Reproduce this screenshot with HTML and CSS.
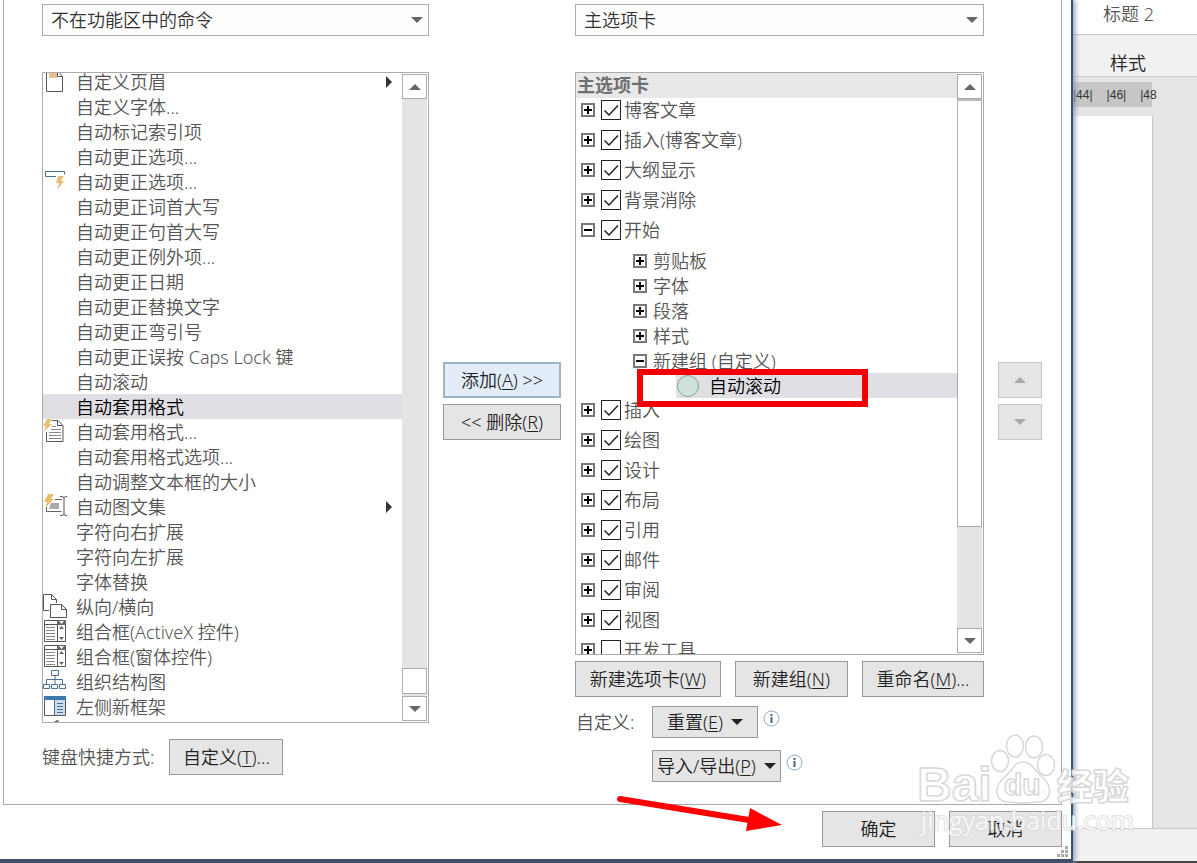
FILE: index.html
```html
<!DOCTYPE html>
<html lang="zh-CN">
<head>
<meta charset="utf-8">
<title>自定义功能区</title>
<link rel="stylesheet" href="styles.css">
</head>
<body>
<svg class="defs" aria-hidden="true">
  <symbol id="up" viewBox="0 0 12 6"><path d="M0 6 6 0l6 6z"/></symbol>
  <symbol id="down" viewBox="0 0 12 6"><path d="M0 0h12L6 6z"/></symbol>
  <symbol id="plus" viewBox="0 0 14 14"><path d="M1 1h12v12H1z" fill="#fff" stroke="#777" stroke-width="2"/><path d="M3 7h8M7 3v8" stroke="#000" stroke-width="2"/></symbol>
  <symbol id="minus" viewBox="0 0 14 14"><path d="M1 1h12v12H1z" fill="#fff" stroke="#777" stroke-width="2"/><path d="M3 7h8" stroke="#000" stroke-width="2"/></symbol>
  <symbol id="combo" viewBox="0 0 24 24"><path d="M1.500 1.500h21v21h-21zM1.500 5.500h21M14.500 5.500v17" fill="none" stroke="#555"/><path d="M14 1h9v5h-9zM16 10l2.500-3 2.500 3zM16 18h5l-2.500 3z" fill="#666"/><path d="M16 2h5l-2.500 3z" fill="#fff"/><path d="M3 8.500h9M3 11.500h9M3 14.500h9M3 17.500h9M3 20.500h9" stroke="#888"/></symbol>
  <symbol id="info" viewBox="0 0 17 17"><circle cx="8.500" cy="8.500" r="7.500" fill="#fff" stroke="#8fa9c0"/><path d="M7.500 4h2v2h-2zM7.500 7h2v6h-2z" fill="#44688c"/></symbol>
</svg>

<div class="screen">
  <main class="dialog">
    <div class="panel">
      <section class="column">
        <select class="picker" aria-label="从下列位置选择命令"><option>不在功能区中的命令</option></select>
        <div class="listbox">
          <ul class="commands">
            <li><svg class="ic" viewBox="0 0 24 24"><path d="M3.500 1.500h11l5 6v15h-16z" fill="#fff" stroke="#555"/><path d="M6 1h8v8H6z" fill="#e3c08d"/><path d="M14.500 1.500v6h5" fill="none" stroke="#555"/></svg><span>自定义页眉</span><svg class="sub" viewBox="0 0 6 12"><path d="M0 0 6 6 0 12z"/></svg></li>
            <li><span>自定义字体...</span></li>
            <li><span>自动标记索引项</span></li>
            <li><span>自动更正选项...</span></li>
            <li><svg class="ic" viewBox="0 0 24 24"><path d="M13 7.500H2.500v-5h19v3" fill="none" stroke="#4a6d90"/><path d="M15 7h6l-3 5h3l-7 9 2-7h-3z" fill="#e9be72"/></svg><span>自动更正选项...</span></li>
            <li><span>自动更正词首大写</span></li>
            <li><span>自动更正句首大写</span></li>
            <li><span>自动更正例外项...</span></li>
            <li><span>自动更正日期</span></li>
            <li><span>自动更正替换文字</span></li>
            <li><span>自动更正弯引号</span></li>
            <li><span>自动更正误按 Caps Lock 键</span></li>
            <li><span>自动滚动</span></li>
            <li class="selected"><span>自动套用格式</span></li>
            <li><svg class="ic" viewBox="0 0 24 24"><path d="M9 1.500h6l5 5v16H3.500V13" fill="#fff" stroke="#555"/><path d="M14.500 1.500v5h5" fill="none" stroke="#555"/><path d="M9 7.500h4M8 10.500h10M6 13.500h12M6 16.500h12M6 19.500h12" stroke="#888"/><path d="M4 0h5L6 5h3l-8 8 2-6H0z" fill="#e9be72"/></svg><span>自动套用格式...</span></li>
            <li><span>自动套用格式选项...</span></li>
            <li><span>自动调整文本框的大小</span></li>
            <li><svg class="ic" viewBox="0 0 24 24"><path d="M12 5.500h7M3.500 13v4.500h15" fill="none" stroke="#666"/><path d="M8 9h8v6H6z" fill="#aaa"/><path d="M17 2.500h2l2 1 2-1h1M21 3v18M17 21.500h2l2-1 2 1h1" fill="none" stroke="#555"/><path d="M5 0h6L8 5h3l-9 9 2-6H1z" fill="#e9be72"/></svg><span>自动图文集</span><svg class="sub" viewBox="0 0 6 12"><path d="M0 0 6 6 0 12z"/></svg></li>
            <li><span>字符向右扩展</span></li>
            <li><span>字符向左扩展</span></li>
            <li><span>字体替换</span></li>
            <li><svg class="ic" viewBox="0 0 24 24"><path d="M6 16.500H.5v-16h8l5 5V9M8.500.5v5h5" fill="none" stroke="#555"/><path d="M7.500 10.500h11l5 5v8h-16z" fill="#fff" stroke="#555"/><path d="M18.500 10.500v5h5" fill="none" stroke="#555"/></svg><span>纵向/横向</span></li>
            <li><svg class="ic"><use href="#combo"/></svg><span>组合框(ActiveX 控件)</span></li>
            <li><svg class="ic"><use href="#combo"/></svg><span>组合框(窗体控件)</span></li>
            <li><svg class="ic" viewBox="0 0 24 24"><path d="M8.500 1.500h7v5h-7zM.5 15.500h6v4h-6zM8.500 15.500h6v4h-6zM16.500 15.500h6v4h-6zM12 7v8M3.500 15v-4.500h16V15" fill="none" stroke="#4a7299"/></svg><span>组织结构图</span></li>
            <li><svg class="ic" viewBox="0 0 24 24"><path d="M1.500 2.500h21v19h-21z" fill="#fff" stroke="#555"/><path d="M12 5h10v16H12z" fill="#cbdcec"/><path d="M1 2h22v4H1z" fill="#4177b0"/><path d="M11.500 6v15M14 9.500h6M14 12.500h6M14 15.500h6M14 18.500h6" stroke="#4a6d90"/></svg><span>左侧新框架</span></li>
            <li><svg class="ic" viewBox="0 0 24 24"><path d="M11 3q2-2 5-2l-2 3z" fill="#555"/></svg></li>
          </ul>
          <div class="scroll">
            <button class="step" aria-label="向上滚动"><svg class="tri"><use href="#up"/></svg></button>
            <div class="track low"><div class="thumb short"></div></div>
            <button class="step" aria-label="向下滚动"><svg class="tri"><use href="#down"/></svg></button>
          </div>
        </div>
        <div class="keyboard"><span>键盘快捷方式:</span><button class="btn">自定义(<u>T</u>)...</button></div>
      </section>

      <div class="transfer">
        <button class="btn primary">添加(<u>A</u>) &gt;&gt;</button>
        <button class="btn">&lt;&lt; 删除(<u>R</u>)</button>
      </div>

      <section class="column">
        <select class="picker" aria-label="自定义功能区"><option>主选项卡</option></select>
        <div class="listbox">
          <div class="tree">
            <h2>主选项卡</h2>
            <div class="tab"><svg class="box"><use href="#plus"/></svg><label><input type="checkbox" checked>博客文章</label></div>
            <div class="tab"><svg class="box"><use href="#plus"/></svg><label><input type="checkbox" checked>插入(博客文章)</label></div>
            <div class="tab"><svg class="box"><use href="#plus"/></svg><label><input type="checkbox" checked>大纲显示</label></div>
            <div class="tab"><svg class="box"><use href="#plus"/></svg><label><input type="checkbox" checked>背景消除</label></div>
            <div class="tab"><svg class="box"><use href="#minus"/></svg><label><input type="checkbox" checked>开始</label></div>
            <div class="groups">
              <div class="group"><svg class="box"><use href="#plus"/></svg>剪贴板</div>
              <div class="group"><svg class="box"><use href="#plus"/></svg>字体</div>
              <div class="group"><svg class="box"><use href="#plus"/></svg>段落</div>
              <div class="group"><svg class="box"><use href="#plus"/></svg>样式</div>
              <div class="group"><svg class="box"><use href="#minus"/></svg>新建组 (自定义)</div>
              <div class="command"><svg class="dot" viewBox="0 0 24 24"><circle cx="12" cy="12" r="10.500" fill="#cfe3dc" stroke="#8f9f9a"/></svg>自动滚动<div class="marker"></div></div>
            </div>
            <div class="tab"><svg class="box"><use href="#plus"/></svg><label><input type="checkbox" checked>插入</label></div>
            <div class="tab"><svg class="box"><use href="#plus"/></svg><label><input type="checkbox" checked>绘图</label></div>
            <div class="tab"><svg class="box"><use href="#plus"/></svg><label><input type="checkbox" checked>设计</label></div>
            <div class="tab"><svg class="box"><use href="#plus"/></svg><label><input type="checkbox" checked>布局</label></div>
            <div class="tab"><svg class="box"><use href="#plus"/></svg><label><input type="checkbox" checked>引用</label></div>
            <div class="tab"><svg class="box"><use href="#plus"/></svg><label><input type="checkbox" checked>邮件</label></div>
            <div class="tab"><svg class="box"><use href="#plus"/></svg><label><input type="checkbox" checked>审阅</label></div>
            <div class="tab"><svg class="box"><use href="#plus"/></svg><label><input type="checkbox" checked>视图</label></div>
            <div class="tab"><svg class="box"><use href="#plus"/></svg><label><input type="checkbox">开发工具</label></div>
          </div>
          <div class="scroll">
            <button class="step" aria-label="向上滚动"><svg class="tri"><use href="#up"/></svg></button>
            <div class="track"><div class="thumb long"></div></div>
            <button class="step" aria-label="向下滚动"><svg class="tri"><use href="#down"/></svg></button>
          </div>
        </div>
        <div class="actions">
          <button class="btn">新建选项卡(<u>W</u>)</button>
          <button class="btn">新建组(<u>N</u>)</button>
          <button class="btn">重命名(<u>M</u>)...</button>
        </div>
        <div class="custom">
          <span>自定义:</span>
          <div class="line"><button class="btn menu reset"><span>重置(<u>E</u>)</span><svg class="tri"><use href="#down"/></svg></button><svg class="info"><use href="#info"/></svg></div>
          <div class="line second"><button class="btn menu"><span>导入/导出(<u>P</u>)</span><svg class="tri"><use href="#down"/></svg></button><svg class="info"><use href="#info"/></svg></div>
        </div>
      </section>

      <div class="transfer">
        <button class="btn" disabled aria-label="上移"><svg class="tri"><use href="#up"/></svg></button>
        <button class="btn" disabled aria-label="下移"><svg class="tri"><use href="#down"/></svg></button>
      </div>
    </div>
    <footer class="footer">
      <button class="btn">确定</button>
      <button class="btn">取消</button>
    </footer>
    <svg class="grip" viewBox="0 0 12 12"><path d="M8 0h3v3H8zM4 4h3v3H4zM8 4h3v3H8zM0 8h3v3H0zM4 8h3v3H4zM8 8h3v3H8z" fill="#aaa"/></svg>
    <svg class="arrow" viewBox="0 0 166 40"><path d="M5 6 134 27" stroke="#f00" stroke-width="6" stroke-linecap="round"/><path d="M135 15 167 32l-36 6z" fill="#f00"/></svg>
  </main>

  <aside class="document">
    <div class="style-name">标题 2</div>
    <div class="style-group">样式</div>
    <div class="ruler"><div class="ticks"><span>|44|</span><span>|46|</span><span>|48</span></div></div>
    <div class="page"></div>
    <div class="status"></div>
  </aside>
</div>

<svg class="watermark" viewBox="0 0 220 110">
  <g fill="#fff" fill-opacity=".85" stroke="#d8d8d8" stroke-width="1.500">
    <ellipse cx="81" cy="31" rx="8.500" ry="10.500"/><ellipse cx="96" cy="16" rx="8.500" ry="11"/><ellipse cx="115" cy="17" rx="8.500" ry="11"/><ellipse cx="127" cy="35" rx="8.500" ry="10.500"/>
    <path d="M104 32c9 0 12 9 19 15 11 9 10 25-4 25-8 1-22 1-29 0-16 0-15-17-4-25 7-6 9-15 18-15z"/>
    <text class="wm-latin" x="-2" y="71">Bai</text>
    <text class="wm-du" x="85" y="65">du</text>
    <text class="wm-cjk" x="138" y="70">经验</text>
  </g>
  <text class="wm-url" x="2" y="100">jingyan.baidu.com</text>
</svg>
</body>
</html>
```

FILE: styles.css
```css
* { box-sizing: border-box; }

body {
  margin: 0;
  height: 100vh;
  overflow: hidden;
  position: relative;
  font: 350 18px/24px "Noto Sans", "Noto Sans CJK SC", sans-serif;
  color: #555;
  background: #444;
}

button, select, input { font: inherit; color: inherit; margin: 0; }
svg { display: block; flex: none; }
u { text-underline-offset: 2px; text-decoration-thickness: 1px; }
.defs { position: absolute; width: 0; height: 0; }

.screen { display: flex; height: 100%; }

.dialog {
  flex: 1;
  min-width: 0;
  position: relative;
  z-index: 1;
  display: flex;
  flex-direction: column;
  padding-left: 3px;
  background: #fff;
  border-right: 2px solid #3b5468;
  border-bottom: 4px solid #3f5068;
  box-shadow: 2px 0 5px #8c9bb8;
}

.panel {
  flex: 1;
  min-height: 0;
  display: grid;
  grid-template-columns: 387fr 118px 409fr 44px;
  grid-template-rows: minmax(0, 1fr);
  gap: 14px;
  margin-right: 9px;
  padding: 4px 19px 22px 38px;
  border: 1px solid #a5a9ac;
  border-top: 0;
}

.column { display: flex; flex-direction: column; min-width: 0; min-height: 0; }

.picker {
  appearance: none;
  width: 100%;
  height: 32px;
  flex: none;
  margin-bottom: 36px;
  padding: 0 8px;
  border: 1px solid #ababab;
  border-radius: 0;
  color: #333;
  background: #fdfdfd url("data:image/svg+xml,%3Csvg xmlns='http://www.w3.org/2000/svg' width='12' height='6'%3E%3Cpath d='M0 0h12L6 6z' fill='%23666'/%3E%3C/svg%3E") no-repeat right 5px center;
}

.listbox {
  flex: 1;
  min-height: 0;
  display: flex;
  border: 1px solid #ababab;
  overflow: hidden;
}

.commands {
  flex: 1;
  min-width: 0;
  list-style: none;
  margin: -4px 0 0;
  padding: 0;
}
.commands li {
  display: flex;
  align-items: center;
  position: relative;
  height: 25px;
  padding: 0 10px 0 33px;
}
.commands span { flex: 1; white-space: nowrap; }
.commands .selected { background: #dfdfe4; color: #000; }
.ic { width: 24px; height: 24px; position: absolute; left: 0; top: 0; }
.sub { width: 6px; height: 12px; fill: #333; }

.scroll { width: 26px; display: flex; flex-direction: column; padding: 1px 1px 1px 0; }
.step {
  width: 25px;
  height: 25px;
  flex: none;
  padding: 0;
  display: grid;
  place-items: center;
  border: 1px solid #ababab;
  background: #fff;
}
.tri { width: 12px; height: 6px; fill: #666; }
.track { flex: 1; min-height: 0; display: flex; flex-direction: column; background: #e4e4e4; }
.low { justify-content: flex-end; padding-bottom: 2px; }
.thumb { border: 1px solid #ababab; background: #fff; }
.short { height: 26px; }
.long { height: 81%; border-top-width: 2px; border-top-color: #bbb; }

.tree { flex: 1; min-width: 0; }
.tree h2 {
  margin: 0;
  padding-left: 1px;
  height: 25px;
  font-size: 18px;
  font-weight: 700;
  line-height: 25px;
  color: #707070;
  background: #e8e8e8;
}
.tab { display: flex; align-items: center; gap: 6px; height: 24px; margin-bottom: 6px; padding-left: 5px; }
.tab label { display: flex; align-items: center; gap: 3px; }
.box { width: 14px; height: 14px; }
input[type="checkbox"] {
  appearance: none;
  width: 20px;
  height: 20px;
  border: 1px solid #222;
  background: #fff;
}
input[type="checkbox"]:checked {
  background: #fff url("data:image/svg+xml,%3Csvg xmlns='http://www.w3.org/2000/svg' width='18' height='18'%3E%3Cpath d='M2.500 9.500 7 14 16 4.500' fill='none' stroke='%23222' stroke-width='1.500'/%3E%3C/svg%3E") center;
}
.groups { padding-left: 57px; }
.group { display: flex; align-items: center; gap: 6px; height: 25px; }
.command {
  position: relative;
  display: flex;
  align-items: center;
  gap: 9px;
  height: 25px;
  margin-left: 43px;
  color: #000;
  background: #dfdfe4;
}
.dot { width: 24px; height: 24px; }
.marker {
  position: absolute;
  left: -39px;
  top: -4px;
  width: 231px;
  height: 38px;
  border: 6px solid #f00000;
}

.btn {
  height: 36px;
  padding: 0;
  white-space: nowrap;
  border: 1px solid #999;
  background: #e5e5e5;
  color: #222;
}
.primary { border: 2px solid #a3b3c6; background: #e3ecf9; }
.btn:disabled { display: grid; place-items: center; border-color: #c6c6c6; }
.btn:disabled .tri { fill: #aaa; }

.keyboard { display: flex; align-items: center; gap: 15px; margin: 16px 0 7px; }
.keyboard .btn { width: 114px; }

.transfer { display: flex; flex-direction: column; gap: 6px; padding-top: 358px; }

.actions { display: flex; justify-content: space-between; gap: 14px; margin-top: 6px; }
.actions .btn { flex: 113 1 0; }
.actions .btn:first-child { flex-grow: 146; }
.actions .btn:last-child { flex-grow: 122; }

.custom { display: grid; grid-template-columns: 76px 1fr; row-gap: 12px; align-items: center; margin-top: 9px; padding-left: 1px; }
.line { display: flex; gap: 5px; }
.second { grid-column: 2; }
.menu { display: flex; align-items: center; gap: 8px; height: 32px; padding: 0 4px; }
.menu .tri { fill: #222; }
.reset { padding: 0 14px; }
.info { width: 17px; height: 17px; margin-top: 4px; }

.footer { display: flex; justify-content: flex-end; gap: 14px; padding: 6px 9px 12px 0; }
.footer .btn { width: 113px; }
.grip { position: absolute; right: 2px; bottom: 1px; width: 12px; height: 12px; }
.arrow { position: absolute; left: 615px; bottom: 26px; width: 166px; height: 40px; overflow: visible; fill: none; }

.document {
  width: 124px;
  flex: none;
  display: flex;
  flex-direction: column;
  margin-bottom: 2px;
  background: #e5e5e5;
}
.style-name { height: 35px; padding: 2px 0 0 30px; background: #fff; border-bottom: 1px solid #c8c8c8; }
.style-group { height: 42px; padding: 16px 0 0 37px; color: #222; background: #f1f1f1; border-bottom: 1px solid #c8c8c8; }
.ruler { padding: 5px 45px 9px 0; }
.ticks {
  display: flex;
  gap: 14px;
  height: 25px;
  background: #c6c6c6;
  font: 12px/26px "Liberation Sans", sans-serif;
  color: #333;
}
.page { flex: 1; margin-right: 44px; background: #fff; border-right: 1px solid #c6c6c6; }
.status { height: 33px; background: #f1f1f1; border-top: 1px solid #c8c8c8; }

.watermark { position: absolute; z-index: 2; right: 58px; bottom: 23px; width: 220px; height: 110px; overflow: visible; pointer-events: none; }
.wm-latin { font: 700 48px "Liberation Sans", sans-serif; }
.wm-du { font: 700 30px "Liberation Sans", sans-serif; }
.wm-cjk { font: 900 36px "Noto Sans CJK SC", sans-serif; }
.wm-url { font: 400 25px "Open Sans", sans-serif; fill: #fff; stroke: #dadada; stroke-width: 2px; paint-order: stroke; fill-opacity: 0.8; stroke-opacity: 0.8; }
```
